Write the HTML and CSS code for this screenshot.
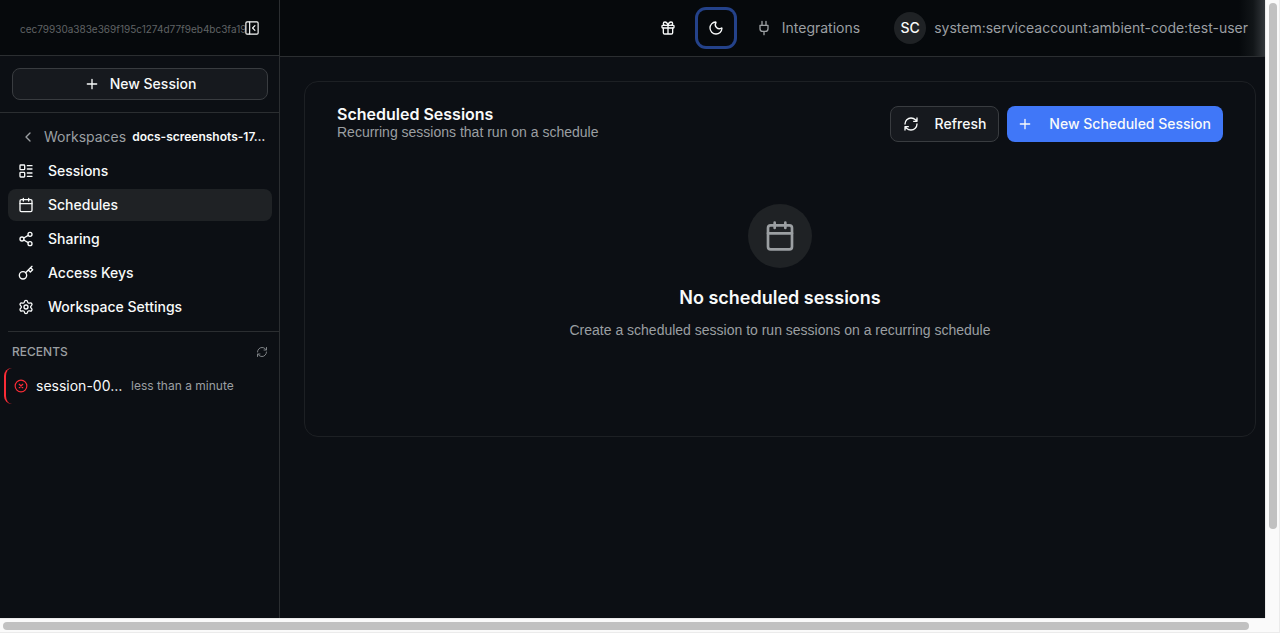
FILE: index.html
```
<!DOCTYPE html>
<html lang="en">
<head>
<meta charset="utf-8">
<title>Scheduled Sessions</title>
<link rel="stylesheet" href="styles.css">
</head>
<body>
<svg class="sprite" aria-hidden="true">
  <symbol id="calendar" viewBox="0 0 24 24"><path d="M8 2v4M16 2v4M3 10h18"/><rect x="3" y="4" width="18" height="18" rx="2"/></symbol>
  <symbol id="refresh" viewBox="0 0 24 24"><path d="M3 12a9 9 0 0 1 9-9 9.75 9.75 0 0 1 6.74 2.74L21 8M21 3v5h-5M21 12a9 9 0 0 1-9 9 9.75 9.75 0 0 1-6.74-2.74L3 16M8 16H3v5"/></symbol>
  <symbol id="plus" viewBox="0 0 24 24"><path d="M5 12h14M12 5v14"/></symbol>
</svg>
<div class="window">
  <div class="app">
    <aside class="sidebar">
      <div class="brand">
        <span class="brand-version">cec79930a383e369f195c1274d77f9eb4bc3fa19</span>
        <button class="collapse" aria-label="Collapse sidebar"><svg class="icon" viewBox="0 0 24 24"><rect x="1.500" y="1.500" width="21" height="21" rx="2"/><path d="M8 2v20M17 8l-4 4 4 4"/></svg></button>
      </div>
      <div class="create">
        <button class="button button-outline button-wide"><svg class="icon"><use href="#plus"/></svg>New Session</button>
      </div>
      <nav class="nav">
        <div class="crumb">
          <a class="crumb-back" href="#"><svg class="icon" viewBox="0 0 24 24"><path d="m15 18-6-6 6-6"/></svg>Workspaces</a>
          <span class="crumb-name">docs-screenshots-17…</span>
        </div>
        <a class="nav-item" href="#"><svg class="icon" viewBox="0 0 24 24"><rect x="3" y="3" width="7" height="7" rx="1"/><rect x="3" y="14" width="7" height="7" rx="1"/><path d="M14 4h7M14 9h7M14 15h7M14 20h7"/></svg>Sessions</a>
        <a class="nav-item nav-item-active" href="#"><svg class="icon"><use href="#calendar"/></svg>Schedules</a>
        <a class="nav-item" href="#"><svg class="icon" viewBox="0 0 24 24"><circle cx="18" cy="5" r="3"/><circle cx="6" cy="12" r="3"/><circle cx="18" cy="19" r="3"/><path d="m8.59 13.51 6.83 3.98M15.41 6.51l-6.82 3.98"/></svg>Sharing</a>
        <a class="nav-item" href="#"><svg class="icon" viewBox="0 0 24 24"><path d="m15.500 7.500 3 3L22 7l-3-3M21 2l-9.600 9.600"/><circle cx="7.500" cy="15.500" r="5.500"/></svg>Access Keys</a>
        <a class="nav-item" href="#"><svg class="icon" viewBox="0 0 24 24"><path d="M9.671 4.136a2.34 2.34 0 0 1 4.659 0 2.34 2.34 0 0 0 3.319 1.915 2.34 2.34 0 0 1 2.33 4.033 2.34 2.34 0 0 0 0 3.831 2.34 2.34 0 0 1-2.33 4.033 2.34 2.34 0 0 0-3.319 1.915 2.34 2.34 0 0 1-4.659 0 2.34 2.34 0 0 0-3.32-1.915 2.34 2.34 0 0 1-2.33-4.033 2.34 2.34 0 0 0 0-3.831A2.34 2.34 0 0 1 6.35 6.051a2.34 2.34 0 0 0 3.319-1.915"/><circle cx="12" cy="12" r="3"/></svg>Workspace Settings</a>
      </nav>
      <section class="recents">
        <div class="recents-head">
          <h2 class="recents-title">RECENTS</h2>
          <button class="recents-refresh" aria-label="Refresh recents"><svg class="icon icon-small"><use href="#refresh"/></svg></button>
        </div>
        <a class="recent" href="#">
          <svg class="icon icon-error" viewBox="0 0 24 24"><circle cx="12" cy="12" r="10"/><path d="m15 9-6 6M9 9l6 6"/></svg>
          <span class="recent-name">session-00…</span>
          <span class="recent-time">less than a minute</span>
        </a>
      </section>
    </aside>
    <div class="content">
      <header class="topbar">
        <button class="icon-button" aria-label="What's new"><svg class="icon" viewBox="0 0 24 24"><rect x="3" y="8" width="18" height="4" rx="1"/><path d="M12 8v13M19 12v7a2 2 0 0 1-2 2H7a2 2 0 0 1-2-2v-7M7.500 8a2.500 2.500 0 0 1 0-5A4.800 8 0 0 1 12 8a4.800 8 0 0 1 4.500-5 2.500 2.500 0 0 1 0 5"/></svg></button>
        <button class="icon-button icon-button-focus" aria-label="Toggle theme"><svg class="icon" viewBox="0 0 24 24"><path d="M20.985 12.486a9 9 0 1 1-9.473-9.472c.405-.022.617.46.402.803a6 6 0 0 0 8.268 8.268c.344-.215.825-.004.803.401"/></svg></button>
        <a class="top-link" href="#"><svg class="icon" viewBox="0 0 24 24"><path d="M12 22v-5M9 8V2M15 8V2M18 8v5a4 4 0 0 1-4 4h-4a4 4 0 0 1-4-4V8Z"/></svg>Integrations</a>
        <button class="user"><span class="avatar">SC</span>system:serviceaccount:ambient-code:test-user</button>
      </header>
      <main class="main">
        <section class="card">
          <div class="card-head">
            <div class="card-heading">
              <h1 class="card-title">Scheduled Sessions</h1>
              <p class="card-subtitle">Recurring sessions that run on a schedule</p>
            </div>
            <div class="actions">
              <button class="button button-outline"><svg class="icon"><use href="#refresh"/></svg>Refresh</button>
              <button class="button button-primary"><svg class="icon"><use href="#plus"/></svg>New Scheduled Session</button>
            </div>
          </div>
          <div class="empty">
            <span class="empty-icon"><svg class="icon icon-large"><use href="#calendar"/></svg></span>
            <h2 class="empty-title">No scheduled sessions</h2>
            <p class="empty-text">Create a scheduled session to run sessions on a recurring schedule</p>
          </div>
        </section>
      </main>
    </div>
  </div>
  <div class="scroll scroll-vertical"><div class="thumb"></div></div>
  <div class="scroll scroll-horizontal"><div class="thumb"></div></div>
  <div class="scroll-corner"></div>
</div>
</body>
</html>
```
FILE: styles.css
```
* { box-sizing: border-box; }
body {
  margin: 0;
  background: #0c0f14;
  color: #f8fafa;
  font: 500 14px/20px Inter, "Liberation Sans", sans-serif;
}
h1, h2, p { margin: 0; }
a { color: inherit; text-decoration: none; }
button {
  padding: 0;
  border: 0;
  background: none;
  color: inherit;
  font: inherit;
  cursor: pointer;
}
.sprite { position: absolute; width: 0; height: 0; }
.icon {
  display: block;
  flex: none;
  width: 16px;
  height: 16px;
  fill: none;
  stroke: currentColor;
  stroke-width: 2;
  stroke-linecap: round;
  stroke-linejoin: round;
}
.window {
  display: grid;
  grid-template: minmax(0, 1fr) 15px / minmax(0, 1fr) 15px;
  height: 100vh;
}
.app { display: flex; min-height: 0; overflow: hidden; }

/* Sidebar */
.sidebar {
  flex: none;
  width: 280px;
  border-right: 1px solid #2b2e31;
}
.brand {
  display: flex;
  align-items: center;
  height: 56px;
  padding: 0 20px;
  border-bottom: 1px solid #2b2e31;
  background: #06090c;
}
.brand-version {
  flex: 1;
  min-width: 0;
  padding-top: 2px;
  color: #606365;
  font-size: 10px;
  font-weight: 400;
  white-space: nowrap;
}
.collapse .icon { width: 14px; height: 14px; }
.create { padding: 12px 11px 12px 12px; border-bottom: 1px solid #2b2e31; }
.button {
  display: flex;
  align-items: center;
  justify-content: center;
  gap: 16px;
  height: 36px;
  padding: 0 12px;
  border-radius: 8px;
  white-space: nowrap;
}
.button-outline { border: 1px solid #393c40; background: #16191e; }
.button-primary { padding: 0 12px 0 10px; background: #4077f8; }
.button-wide { gap: 10px; width: 100%; height: 32px; }
.nav {
  display: grid;
  grid-template-columns: minmax(0, 1fr);
  gap: 2px;
  margin-left: 8px;
  padding: 8px 7px 8px 0;
  border-bottom: 1px solid #2b2e31;
}
.crumb {
  display: flex;
  align-items: center;
  gap: 6px;
  height: 32px;
  padding: 0 4px 0 12px;
}
.crumb-back {
  display: flex;
  align-items: center;
  gap: 8px;
  color: #9b9fa2;
  font-weight: 400;
}
.crumb-name {
  flex: 1;
  font-size: 12px;
  font-weight: 600;
  white-space: nowrap;
}
.nav-item {
  display: flex;
  align-items: center;
  gap: 14px;
  height: 32px;
  padding: 0 10px;
  border-radius: 8px;
}
.nav-item-active { background: #1f2225; }
.recents { padding: 8px 7px 8px 4px; }
.recents-head {
  display: flex;
  align-items: center;
  justify-content: space-between;
  height: 24px;
  padding: 0 4px 0 8px;
  color: #9b9fa2;
}
.recents-title { font-size: 12px; font-weight: 500; }
.icon-small { width: 12px; height: 12px; opacity: 0.8; }
.recent {
  display: flex;
  align-items: center;
  gap: 8px;
  height: 36px;
  margin-top: 4px;
  padding: 0 8px;
  border-left: 2px solid #fb2c36;
  border-radius: 8px;
}
.icon-error { width: 14px; height: 14px; color: #fb2c36; }
.recent-name {
  width: 87px;
  font-weight: 400;
  white-space: nowrap;
}
.recent-time {
  color: #9b9fa2;
  font-size: 12px;
  font-weight: 400;
}

/* Top bar */
.content { flex: 1; min-width: 0; }
.topbar {
  display: flex;
  align-items: center;
  justify-content: flex-end;
  height: 57px;
  padding-right: 17px;
  border-bottom: 1px solid #2b2e31;
  background: linear-gradient(to left, #32363a, #111518 12px, #06090c 26px);
}
.icon-button {
  display: grid;
  place-items: center;
  width: 36px;
  height: 36px;
  border-radius: 8px;
}
.icon-button-focus {
  margin-left: 12px;
  box-shadow: 0 0 0 3px #24428a;
}
.top-link {
  display: flex;
  align-items: center;
  gap: 10px;
  margin: 0 34px 0 22px;
  color: #9b9fa2;
  font-weight: 400;
}
.user {
  display: flex;
  align-items: center;
  gap: 8px;
  color: #9b9fa2;
  font-weight: 400;
}
.avatar {
  display: grid;
  place-items: center;
  width: 32px;
  height: 32px;
  border-radius: 50%;
  background: #1f2225;
  color: #f8fafa;
  font-weight: 500;
}

/* Main card */
.main { padding: 24px 9px 24px 24px; }
.card {
  padding: 24px 32px 96px;
  border: 1px solid #1d2024;
  border-radius: 14px;
}
.card-head { display: flex; justify-content: space-between; }
.card-title { font-size: 16px; line-height: 16px; font-weight: 600; }
.card-subtitle,
.empty-text {
  color: #9b9fa2;
  font-family: "Liberation Sans", Inter, sans-serif;
  font-weight: 400;
}
.actions { display: flex; gap: 8px; }
.empty {
  display: flex;
  flex-direction: column;
  align-items: center;
  padding-top: 62px;
}
.empty-icon {
  display: grid;
  place-items: center;
  width: 64px;
  height: 64px;
  border-radius: 50%;
  background: #1f2225;
  color: #9b9fa2;
}
.icon-large { width: 32px; height: 32px; }
.empty-title {
  margin: 16px 0 8px;
  font-size: 18px;
  line-height: 28px;
  font-weight: 600;
}

/* Scrollbars */
.scroll { display: flex; background: #fafafa; }
.scroll-vertical {
  flex-direction: column;
  padding: 3px;
  border: solid #ebebeb;
  border-width: 0 1px;
}
.scroll-horizontal {
  padding: 3px;
  border: solid #ebebeb;
  border-width: 1px 0;
}
.thumb { border-radius: 4px; background: #c1c1c1; }
.scroll-vertical .thumb { width: 8px; height: 86%; }
.scroll-horizontal .thumb { width: 99%; height: 8px; }
.scroll-corner {
  border: solid #ebebeb;
  border-width: 0 1px 1px 0;
  background: #fafafa;
}
```
